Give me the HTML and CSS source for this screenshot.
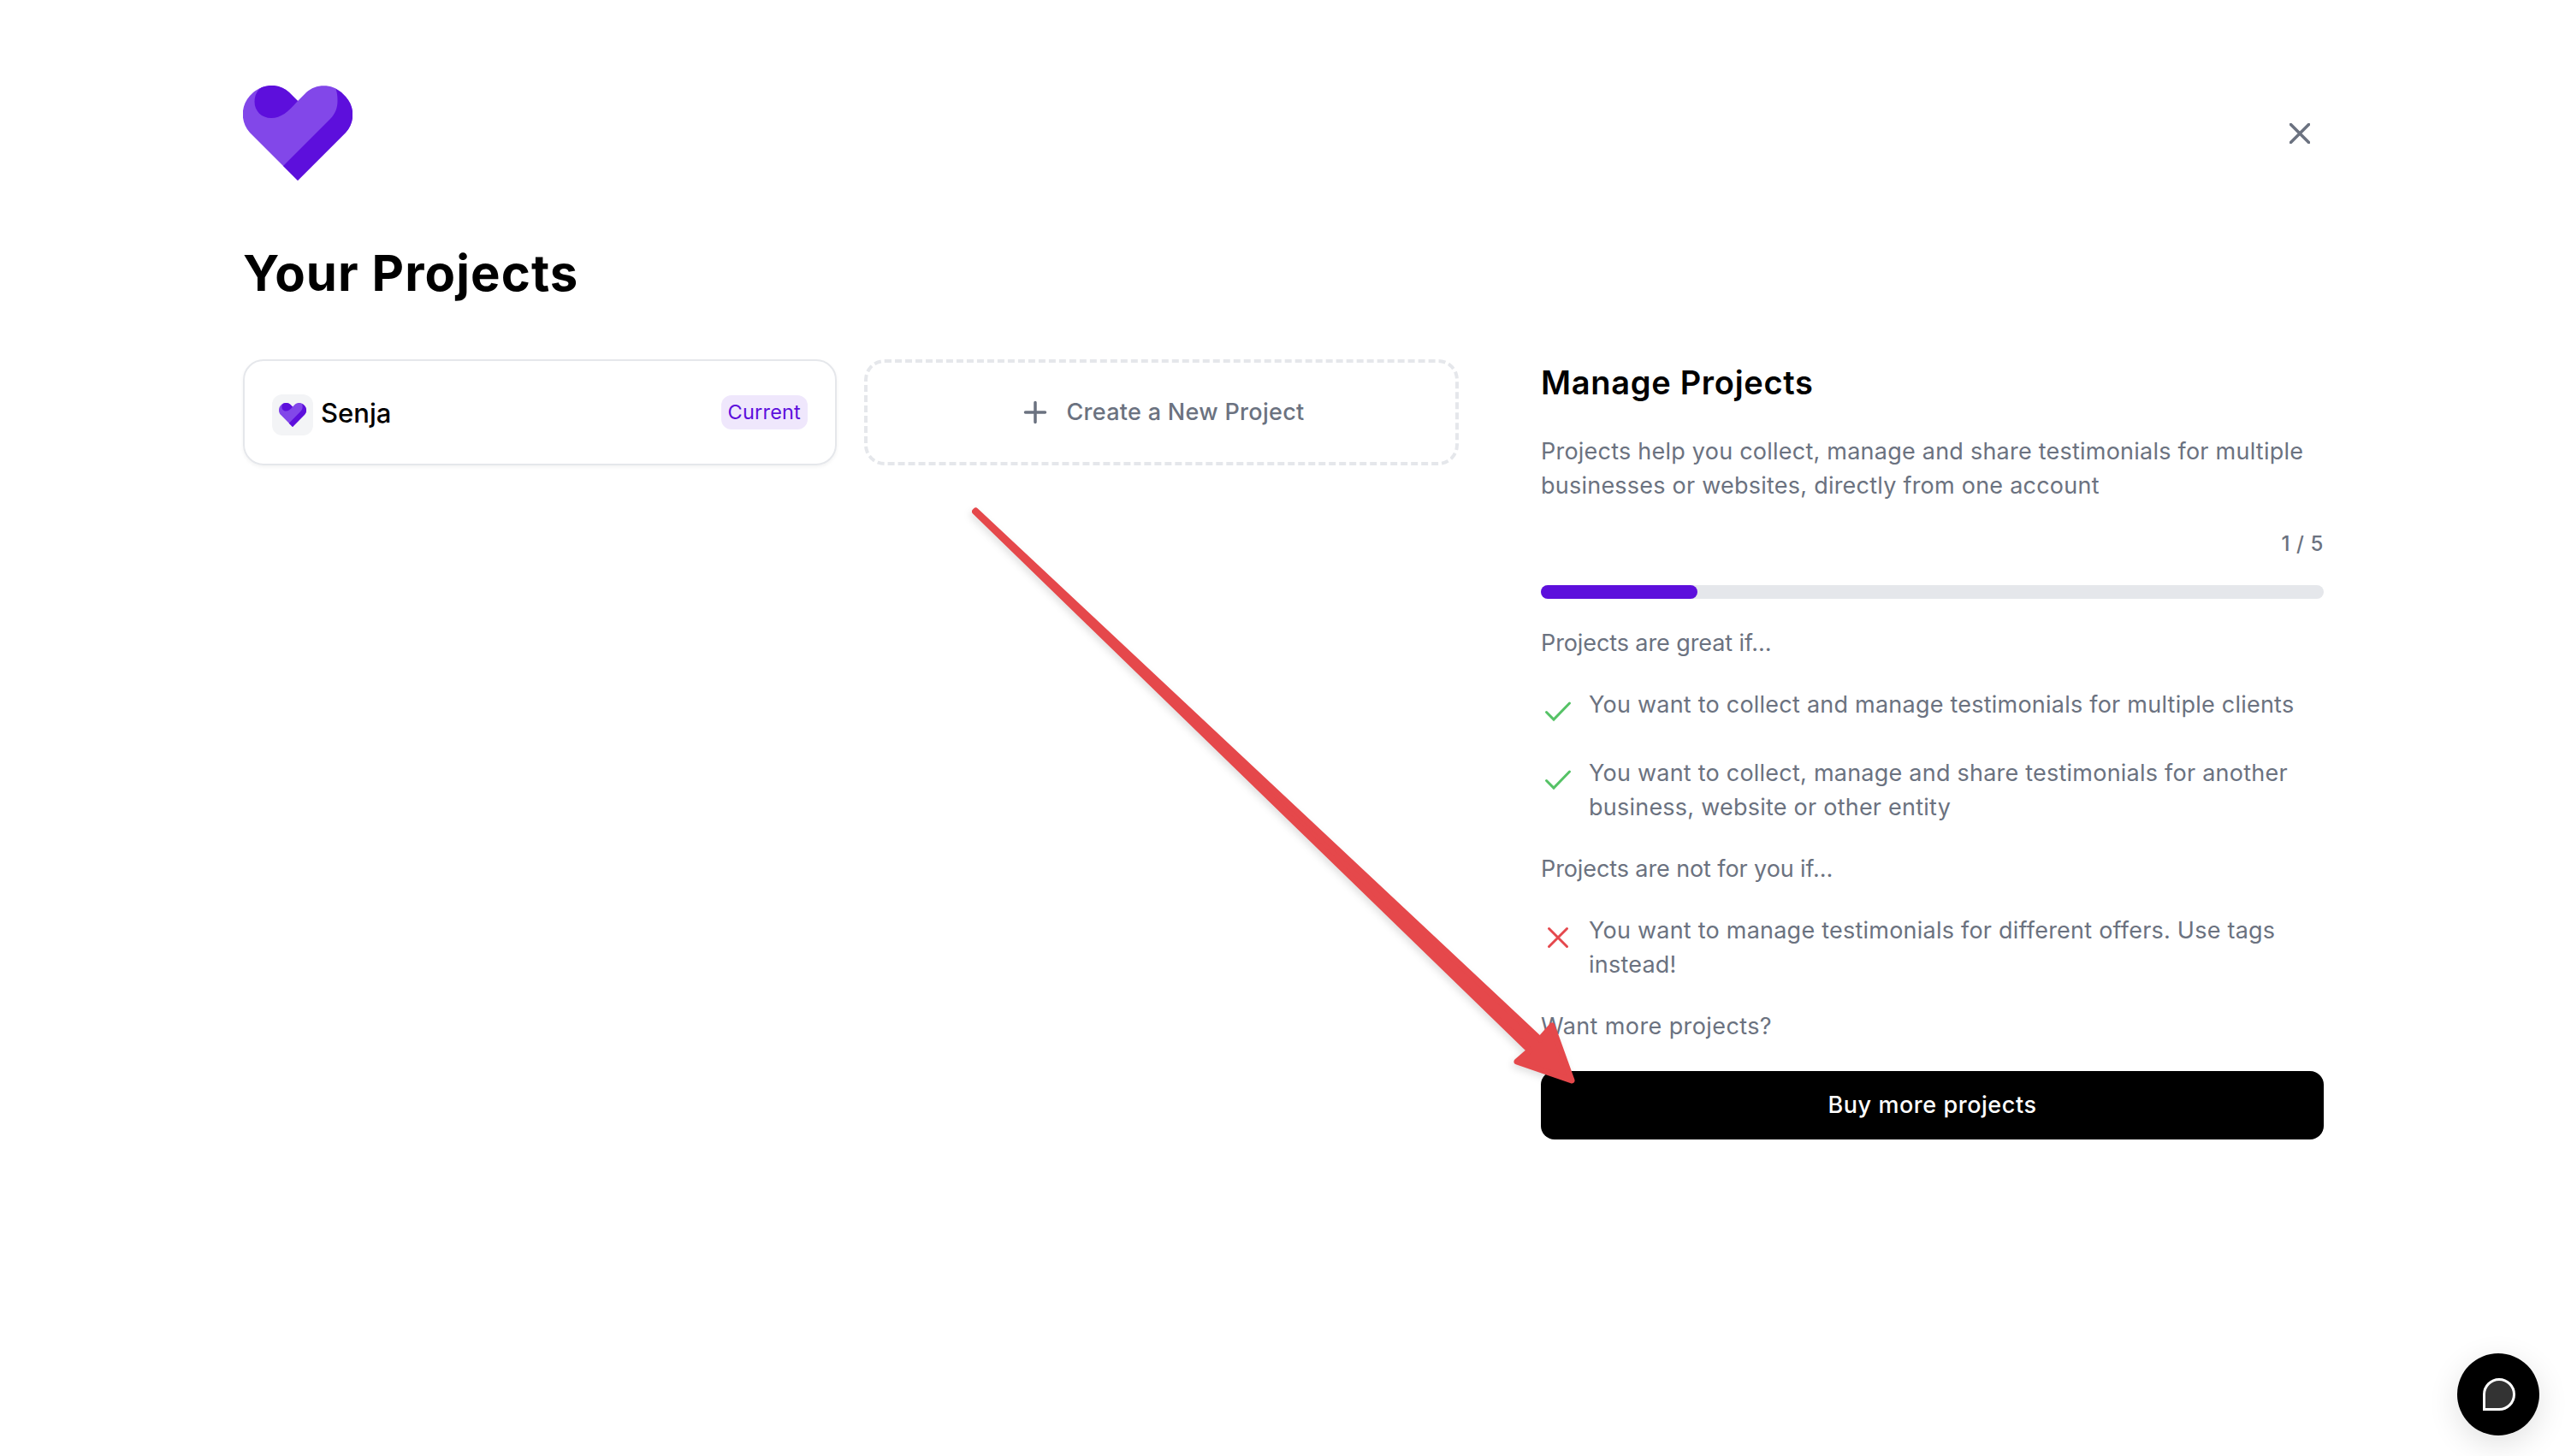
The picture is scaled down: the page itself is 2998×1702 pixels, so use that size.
FILE: index.html
```
<!DOCTYPE html>
<html lang="en">

<head>
    <meta charset="UTF-8">
    <meta name="viewport" content="width=device-width, initial-scale=1.0">
    <title>Your Projects</title>
    <link rel="stylesheet" href="styles.css">
</head>

<body>
    <!-- shared heart logo -->
    <svg class="sprite">
        <symbol id="heart" viewBox="0 0 128 111" preserveAspectRatio="none">
            <path fill="#8247e9" d="M64 111 L8 55 C-3 43 -3 24 8 12 L12 8 C24 -2.500 43 -2.500 54 8 L64 18 L74 8 C85 -2.500 104 -2.500 115 8 L120 13 C131 25 131 43 120 55 Z" />
            <path fill="#5d0fdc" d="M64 18 L54 8 C45 -.5 33 -2 22 2 C16 6 13.500 12 13.500 19 C13.500 30 22 38 33 38 C44 38 53 31 64 18 Z" />
            <path fill="#5d0fdc" d="M108.500 4 C110 8 110.500 12 110.500 18 C110.500 26 108 33 102 39 L47 94 L64 111 L120 55 C131 43 131 25 120 13 L115 8 Z" />
        </symbol>
    </svg>

    <div class="container">
        <header>
            <svg class="logo"><use href="#heart" /></svg>
            <button class="close-btn" aria-label="Close">
                <svg width="24" height="24" viewBox="0 0 24 24"><path d="M1.500 1.500 L22.500 22.500 M22.500 1.500 L1.500 22.500" /></svg>
            </button>
        </header>

        <h1>Your Projects</h1>

        <div class="content">
            <div class="projects">
                <div class="project">
                    <span class="avatar"><svg><use href="#heart" /></svg></span>
                    <span class="name">Senja</span>
                    <span class="badge">Current</span>
                </div>
                <button class="new-project">
                    <svg width="28" height="28" viewBox="0 0 28 28"><path d="M14 2.500 V25.500 M2.500 14 H25.500" /></svg>
                    <span>Create a New Project</span>
                </button>
            </div>

            <aside class="manage">
                <h2>Manage Projects</h2>
                <p>Projects help you collect, manage and share testimonials for multiple businesses or websites, directly from one account</p>
                <div class="count">1 / 5</div>
                <div class="progress">
                    <div class="progress-bar" style="width: 20%"></div>
                </div>
                <div class="reasons">
                    <p class="dots">Projects are great if…</p>
                    <div class="reason">
                        <svg class="yes" viewBox="0 0 40 40"><path d="M6.500 21.500 L15 30 L33.500 11" /></svg>
                        <p>You want to collect and manage testimonials for multiple clients</p>
                    </div>
                    <div class="reason">
                        <svg class="yes" viewBox="0 0 40 40"><path d="M6.500 21.500 L15 30 L33.500 11" /></svg>
                        <p>You want to collect, manage and share testimonials for another business, website or other entity</p>
                    </div>
                    <p class="dots">Projects are not for you if…</p>
                    <div class="reason">
                        <svg class="no" viewBox="0 0 40 40"><path d="M9.500 10.500 L30.500 31.500 M30.500 10.500 L9.500 31.500" /></svg>
                        <p>You want to manage testimonials for different offers. Use tags instead!</p>
                    </div>
                    <p class="want">Want more projects?</p>
                </div>
                <button class="buy-btn">Buy more projects</button>
            </aside>
        </div>
    </div>

    <svg class="arrow" width="2998" height="1702">
        <path d="M1139.500 598 L1140.500 597 L1800 1215 L1814 1199 L1837 1263 L1773 1241 L1788 1228 Z" />
    </svg>

    <button class="chat-btn" aria-label="Chat">
        <svg width="40" height="40" viewBox="0 0 40 40"><path d="M2.500 37.500 V20 A17.500 17.500 0 1 1 20 37.500 Z" /></svg>
    </button>
</body>

</html>
```
FILE: styles.css
```
* {
    box-sizing: border-box;
}

body {
    margin: 0;
    min-height: 1702px;
    background-color: #fff;
    color: #6b7280;
    font-family: Inter, "Liberation Sans", sans-serif;
    font-size: 27px;
    line-height: 40px;
    letter-spacing: 0.23px;
    overflow: hidden;
}

h1,
h2,
p {
    margin: 0;
}

button {
    font: inherit;
    border: none;
    cursor: pointer;
}

svg path {
    stroke-linecap: round;
}

.sprite {
    position: absolute;
    width: 0;
    height: 0;
}

.container {
    padding: 100px 282px 0 284px;
}

header {
    display: flex;
    justify-content: space-between;
    align-items: center;
    height: 111px;
}

.logo {
    width: 128px;
    height: 111px;
}

.close-btn {
    display: flex;
    padding: 16px;
    background: none;
}

.close-btn svg {
    fill: none;
    stroke: #6b7280;
    stroke-width: 3.5;
}

h1 {
    margin: 68px 0 61px;
    color: #000;
    font-size: 58px;
    font-weight: 700;
    line-height: 80px;
    letter-spacing: 1.1px;
}

.content {
    display: flex;
    justify-content: space-between;
    align-items: flex-start;
}

.projects {
    display: grid;
    grid-template-columns: 694px 695px;
    gap: 32px;
}

.project,
.new-project {
    display: flex;
    align-items: center;
    height: 124px;
    border-radius: 24px;
}

.project {
    padding: 0 32px;
    border: 2px solid #e5e7eb;
    box-shadow: 0 2px 4px rgba(0, 0, 0, 0.05);
}

.avatar {
    display: flex;
    align-items: center;
    justify-content: center;
    width: 48px;
    height: 48px;
    margin-top: 6px;
    border-radius: 12px;
    background-color: #f3f4f6;
}

.avatar svg {
    width: 32px;
    height: 28px;
}

.name {
    margin-left: 9px;
    padding-top: 2px;
    color: #000;
    font-size: 31px;
    font-weight: 500;
    letter-spacing: 0;
}

.badge {
    margin-left: auto;
    padding: 0 8px;
    border-radius: 12px;
    background-color: #efe7fc;
    color: #5d0fdc;
    font-size: 23.5px;
    font-weight: 400;
    letter-spacing: 0.2px;
}

.new-project {
    justify-content: center;
    gap: 22px;
    padding-left: 12px;
    border: 4px dashed #e5e7eb;
    background: none;
    color: #6b7280;
    font-weight: 500;
    letter-spacing: 0.3px;
}

.new-project svg {
    fill: none;
    stroke: #6b7280;
    stroke-width: 3.5;
}

.manage {
    width: 915px;
}

.manage h2 {
    margin-bottom: 34px;
    color: #000;
    font-size: 38px;
    font-weight: 600;
    line-height: 54px;
    letter-spacing: 0.7px;
}

.count {
    margin: 28px 0;
    font-size: 24px;
    font-weight: 500;
    letter-spacing: 0.6px;
    text-align: right;
}

.progress {
    height: 16px;
    margin-bottom: 32px;
    border-radius: 8px;
    background-color: #e5e7eb;
}

.progress-bar {
    height: 100%;
    border-radius: 8px;
    background-color: #5d0fdc;
}

.reasons {
    display: flex;
    flex-direction: column;
    gap: 32px;
    margin-bottom: 32px;
}

.reason {
    display: flex;
    align-items: flex-start;
    gap: 16px;
}

.reason svg {
    flex: none;
    width: 40px;
    height: 40px;
    margin-top: 7px;
    margin-bottom: 1px;
    fill: none;
    stroke-width: 3;
}

.yes {
    stroke: #55c266;
}

.no {
    stroke: #e5484d;
}

.dots {
    letter-spacing: -0.1px;
}

.want {
    letter-spacing: 0.4px;
}

.buy-btn {
    width: 100%;
    height: 80px;
    border-radius: 16px;
    background-color: #000;
    color: #fff;
    font-weight: 500;
    letter-spacing: 0.55px;
}

.arrow {
    position: absolute;
    top: 0;
    left: 0;
    pointer-events: none;
    filter: drop-shadow(-2px 4px 4px rgba(0, 0, 0, 0.12));
}

.arrow path {
    fill: #e5484b;
    stroke: #e5484b;
    stroke-width: 7;
    stroke-linejoin: round;
}

.chat-btn {
    position: fixed;
    right: 30px;
    bottom: 24px;
    display: flex;
    align-items: center;
    justify-content: center;
    width: 96px;
    height: 96px;
    padding: 0 0 0 2px;
    border-radius: 50%;
    background-color: #000;
    box-shadow: 0 10px 36px rgba(0, 0, 0, 0.12);
}

.chat-btn svg {
    fill: #333;
    stroke: #fff;
    stroke-width: 3;
}
```
